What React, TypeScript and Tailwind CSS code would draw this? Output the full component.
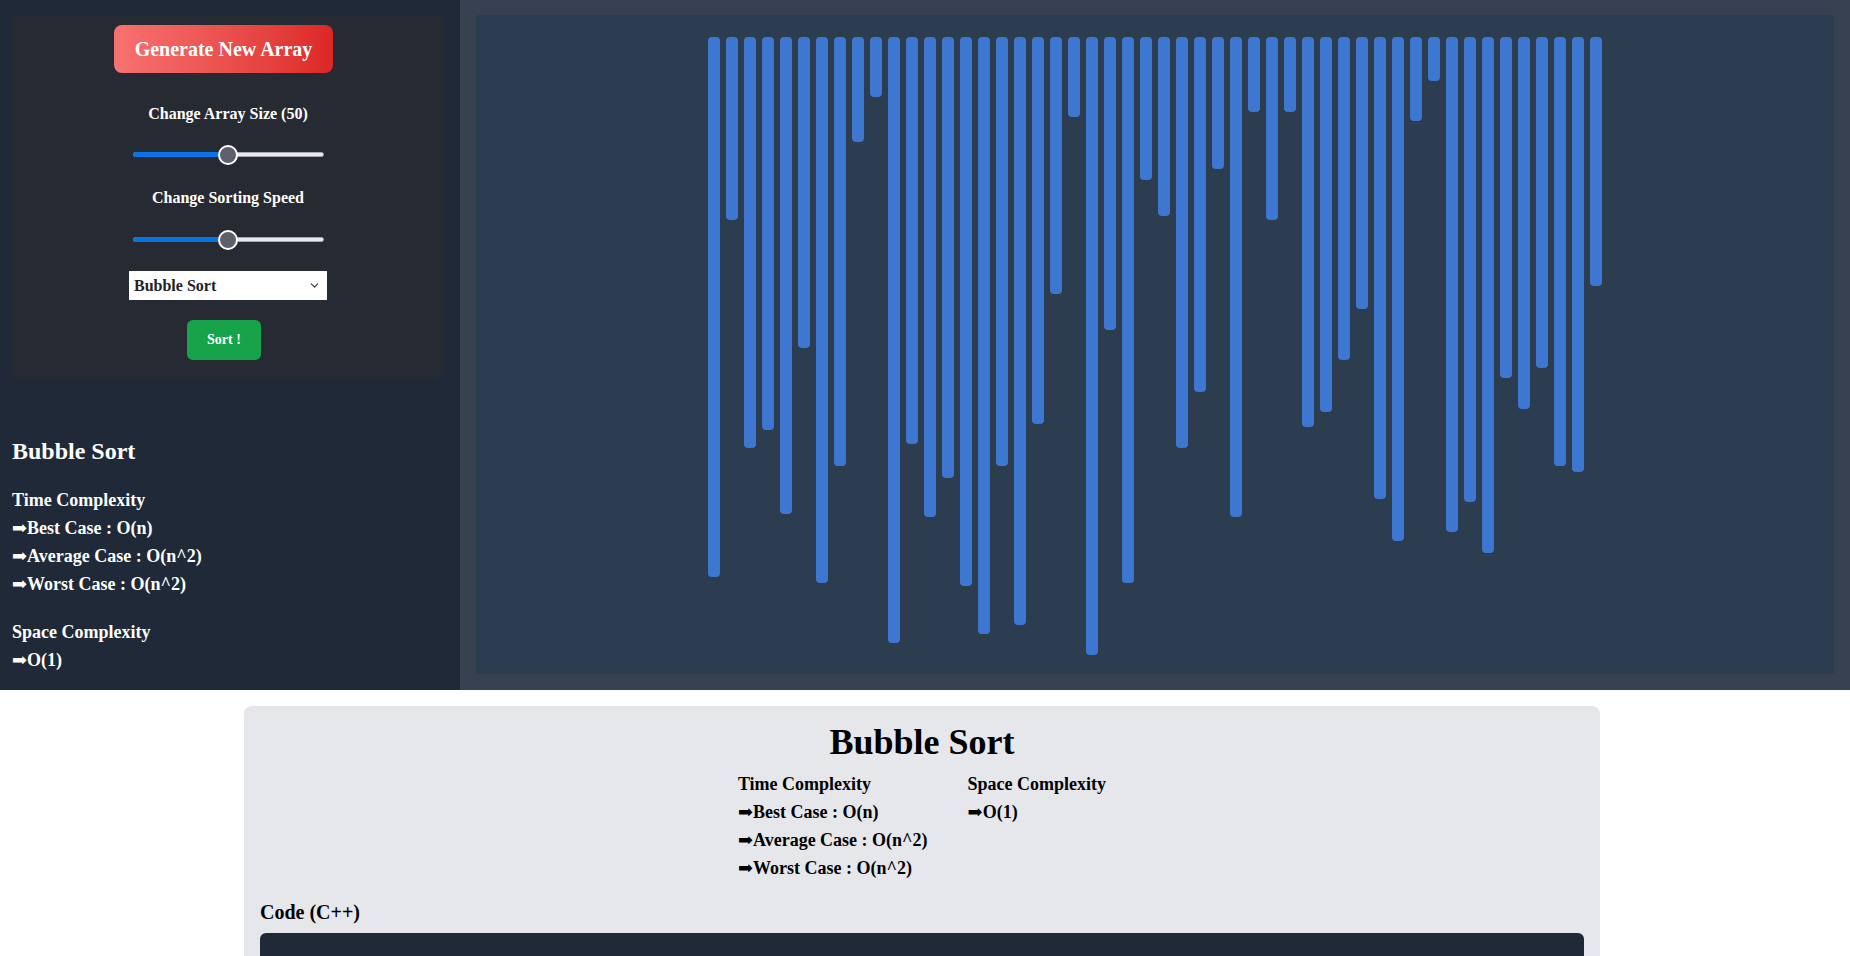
import { ChevronDown } from "lucide-react";

const heights = [
  540, 183, 411, 393, 477, 311, 546, 429, 105, 60, 606, 407, 480, 441, 549, 597,
  429, 588, 387, 257, 80, 618, 293, 546, 143, 179, 411, 355, 132, 480, 75, 183,
  75, 390, 375, 323, 272, 462, 504, 84, 44, 495, 465, 516, 341, 372, 331, 429,
  435, 249,
];

const code = `void bubbleSort(int arr[], int n)
{
    int i, j;
    bool swapped;
    for (i = 0; i < n - 1; i++) {
        swapped = false;
        for (j = 0; j < n - i - 1; j++) {
            if (arr[j] > arr[j + 1]) {
                swap(arr[j], arr[j + 1]);
                swapped = true;
            }
        }

        // If no two elements were swapped
        // by inner loop, then break
        if (swapped == false)
            break;
    }
}

void printArray(int arr[], int size)
{
    int i;
    for (i = 0; i < size; i++)
        cout << " " << arr[i];
    cout << endl;
}

int main()
{
    int arr[] = { 64, 34, 25, 12, 22, 11, 90 };
    int N = sizeof(arr) / sizeof(arr[0]);
    bubbleSort(arr, N);
    cout << "Sorted array: \\n";
    printArray(arr, N);
    return 0;
}`;

function Slider() {
  return (
    <div className="relative h-5 w-[191px]">
      <div className="absolute top-[7px] left-0 right-0 h-[5px] rounded-full border border-[#a5a5ad] bg-[#e9e9ef]" />
      <div className="absolute top-[7px] left-0 h-[5px] w-1/2 rounded-full bg-[#0b72e7]" />
      <div className="absolute top-0 left-1/2 size-[20px] -translate-x-1/2 rounded-full border-2 border-white bg-[#5f606e]" />
    </div>
  );
}

export default function App() {
  return (
    <div className="min-h-screen bg-white font-['Liberation_Serif','DejaVu_Serif',serif] font-bold">
      <div className="flex h-[690px]">
        <aside className="flex w-[460px] shrink-0 flex-col bg-[#1f2937] pt-[15px] pl-3 text-white">
          <div className="flex w-[432px] flex-col items-center bg-[#262a33] pt-[10px] pb-[18px]">
            <button
              type="button"
              className="mr-[9px] h-12 w-[219px] rounded-lg bg-linear-to-r from-[#f87171] to-[#dc2626] text-[20px] text-white"
            >
              Generate New Array
            </button>
            <div className="mt-[29px] text-base leading-6">Change Array Size (50)</div>
            <div className="mt-[19px]">
              <Slider />
            </div>
            <div className="mt-[21px] text-base leading-6">Change Sorting Speed</div>
            <div className="mt-[20px]">
              <Slider />
            </div>
            <div className="mt-[21px] flex h-[29px] w-[198px] items-center justify-between bg-white pl-[5px] pr-[6px] text-base text-[#1f2329]">
              <span>Bubble Sort</span>
              <ChevronDown size={13} strokeWidth={2} className="text-[#333]" />
            </div>
            <button
              type="button"
              className="mt-[20px] mr-[8px] h-10 w-[74px] rounded-md bg-[#16a34a] text-sm text-white"
            >
              Sort !
            </button>
          </div>

          <h2 className="mt-[57px] text-2xl leading-8">Bubble Sort</h2>
          <div className="mt-[19px] text-lg leading-7">
            <div>Time Complexity</div>
            <div>➡Best Case : O(n)</div>
            <div>➡Average Case : O(n^2)</div>
            <div>➡Worst Case : O(n^2)</div>
          </div>
          <div className="mt-5 text-lg leading-7">
            <div>Space Complexity</div>
            <div>➡O(1)</div>
          </div>
        </aside>

        <section className="flex flex-1 bg-[#374151] px-4 pt-[15px] pb-4">
          <div className="flex flex-1 items-start justify-center gap-[6px] bg-[#2d3d50] pt-[22px]">
            {heights.map((h, i) => (
              <div
                key={i}
                className="w-[12px] shrink-0 rounded bg-[#3d77d1]"
                style={{ height: h }}
              />
            ))}
          </div>
        </section>
      </div>

      <div className="mx-auto mt-4 mb-4 w-[1356px] -translate-x-[3px] rounded-lg bg-[#e5e7eb] px-4 pt-4 pb-4 text-black">
        <h1 className="text-center text-4xl leading-10">Bubble Sort</h1>
        <div className="mt-[8px] flex justify-center gap-10 text-lg leading-7">
          <div>
            <div>Time Complexity</div>
            <div>➡Best Case : O(n)</div>
            <div>➡Average Case : O(n^2)</div>
            <div>➡Worst Case : O(n^2)</div>
          </div>
          <div>
            <div>Space Complexity</div>
            <div>➡O(1)</div>
          </div>
        </div>
        <div className="mt-4 text-xl leading-7">Code (C++)</div>
        <pre className="mt-[7px] h-[805px] overflow-hidden rounded-md bg-[#1f2937] p-6 font-['Liberation_Mono',monospace] text-sm leading-6 font-normal text-[#e5e7eb]">
          {code}
        </pre>
      </div>
    </div>
  );
}
